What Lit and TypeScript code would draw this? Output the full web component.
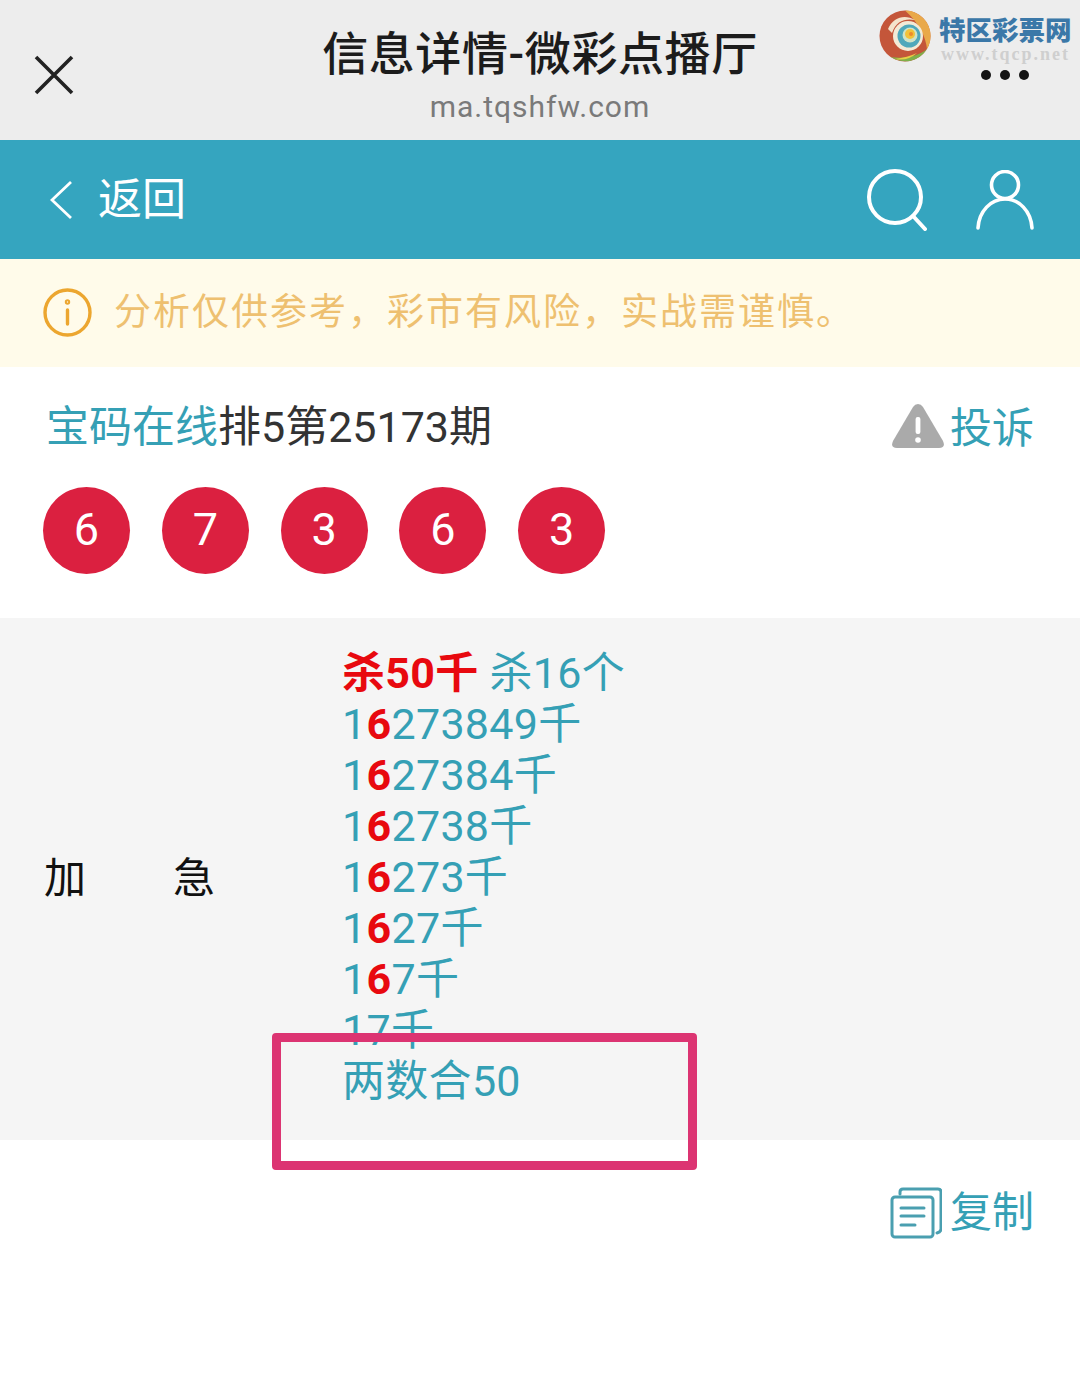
import { LitElement, html, css } from "lit";
import { customElement } from "lit/decorators.js";

const lines = ["273849", "27384", "2738", "273", "27", "7"];

@customElement("app-root")
export class AppRoot extends LitElement {
  static styles = css`
    :host { display: block; position: relative; width: 1080px; height: 1380px; background: #fff; font-family: Roboto, "Noto Sans CJK SC", sans-serif; overflow: hidden; }
    .top { height: 140px; background: #ededed; display: grid; grid-template-columns: 110px 1fr 110px; }
    .close { display: flex; align-items: center; padding-left: 34px; padding-top: 10px; }
    .heading { display: flex; flex-direction: column; align-items: center; padding-top: 24px; }
    .title { font-size: 46px; line-height: 60px; color: #1c1c1c; font-weight: 500; white-space: nowrap; letter-spacing: 0.6px; }
    .url { font-size: 30px; line-height: 44px; color: #7a7a7a; margin-top: 1px; letter-spacing: 1px; }
    .dots { display: flex; gap: 9px; padding: 70px 0 0 11px; }
    .dots i { width: 10px; height: 10px; border-radius: 50%; background: #141414; }
    .nav { height: 119px; background: #35a5bf; display: flex; align-items: center; padding: 0 46px 0 50px; color: #fff; }
    .back { font-size: 44px; margin-left: 24px; flex: 1; line-height: 1; }
    .nav svg { display: block; }
    .nav .user { margin-left: 49px; }
    .notice { height: 108px; background: #fffbea; display: flex; align-items: center; padding-left: 43px; gap: 22px; color: #eec070; font-size: 37px; }
    .notice svg { margin-bottom: 2px; }
    .notice span { letter-spacing: 2px; white-space: nowrap; margin-bottom: 9px; }
    .head { display: flex; justify-content: space-between; align-items: center; padding: 32px 46px 0 46px; height: 48px; box-sizing: content-box; }
    .name { font-size: 43px; color: #333; white-space: nowrap; }
    .name b { font-weight: 400; color: #35a0b5; }
    .report { display: flex; align-items: center; gap: 5px; font-size: 42px; color: #35a0b5; margin-top: 3px; }
    .report svg { margin-top: 3px; margin-left: -2px; }
    .balls { display: flex; gap: 31.8px; padding: 40px 0 44px 43px; }
    .ball { width: 87px; height: 87px; border-radius: 50%; background: #db2040; color: #fff; font-size: 45px; display: flex; align-items: center; justify-content: center; padding-bottom: 2px; box-sizing: border-box; }
    .table { background: #f5f5f5; display: flex; align-items: center; height: 522px; }
    .label { width: 171px; margin-left: 44px; display: flex; justify-content: space-between; font-size: 42px; color: #111; margin-right: 127px; margin-top: -10px; }
    .data { font-size: 43px; line-height: 51px; color: #35a0b5; margin-top: -3px; letter-spacing: 0.3px; }
    .data div { white-space: nowrap; }
    .data .hot { color: #e8090f; font-weight: 700; }
    .copy { display: flex; justify-content: flex-end; align-items: center; gap: 8px; padding: 45px 46px 0 0; font-size: 42px; color: #35a0b5; line-height: 56px; }
    .logo { position: absolute; left: 879px; top: 9px; display: flex; gap: 8px; }
    .brand { display: flex; flex-direction: column; padding-top: 6px; }
    .brand b { font-size: 26.5px; line-height: 32px; color: #3b78a8; font-weight: 900; white-space: nowrap; }
    .brand span { font-family: "Liberation Serif", serif; font-size: 18px; line-height: 20px; letter-spacing: 2px; color: #cfcfcf; font-weight: 700; margin-top: -3px; margin-left: 2px; white-space: nowrap; }
    .mark { position: absolute; left: 272px; top: 1033px; width: 425px; height: 137px; box-sizing: border-box; border: 9px solid #dc3472; border-radius: 4px; }
  `;

  render() {
    return html`
      <div class="top">
        <div class="close">
          <svg width="40" height="40" viewBox="0 0 40 40" fill="none" stroke="#222" stroke-width="3.6"><path d="M2 2 38 38M38 2 2 38"/></svg>
        </div>
        <div class="heading">
          <div class="title">信息详情-微彩点播厅</div>
          <div class="url">ma.tqshfw.com</div>
        </div>
        <div class="dots"><i></i><i></i><i></i></div>
      </div>
      <div class="nav">
        <svg width="24" height="40" viewBox="0 0 24 40" fill="none" stroke="#fff" stroke-width="2.8"><path d="M21 2 2 20 21 38"/></svg>
        <div class="back">返回</div>
        <svg width="60" height="62" viewBox="0 0 60 62" fill="none" stroke="#fff" stroke-width="4" stroke-linecap="round"><circle cx="28" cy="28" r="26"/><path d="M46 47 58 60"/></svg>
        <svg class="user" width="58" height="60" viewBox="0 0 58 60" fill="none" stroke="#fff" stroke-width="3.6" stroke-linecap="round"><circle cx="29" cy="15" r="13.5"/><path d="M2 58C3 41 15 29 29 29S55 41 56 58"/></svg>
      </div>
      <div class="notice">
        <svg width="49" height="49" viewBox="0 0 49 49" fill="none" stroke="#eca62f" stroke-width="3.4" stroke-linecap="round"><circle cx="24.5" cy="24.5" r="22.5"/><path d="M24.5 22V36"/><circle cx="24.5" cy="14" r="1"/></svg>
        <span>分析仅供参考，彩市有风险，实战需谨慎。</span>
      </div>
      <div class="head">
        <div class="name"><b>宝码在线</b>排5第25173期</div>
        <div class="report">
          <svg width="54" height="46" viewBox="0 0 54 46" fill="#aaa"><path d="M27 1 Q24 1 22 4 L2 38 Q-1 45 6 45 H48 Q55 45 52 38 L32 4 Q30 1 27 1Z"/><rect x="24.6" y="14" width="4.8" height="17" rx="2" fill="#fff"/><circle cx="27" cy="37" r="2.8" fill="#fff"/></svg>
          投诉
        </div>
      </div>
      <div class="balls">
        ${["6", "7", "3", "6", "3"].map((n) => html`<div class="ball">${n}</div>`)}
      </div>
      <div class="table">
        <div class="label"><span>加</span><span>急</span></div>
        <div class="data">
          <div><span class="hot">杀50千</span> 杀16个</div>
          ${lines.map((l) => html`<div>1<span class="hot">6</span>${l}千</div>`)}
          <div>17千</div>
          <div>两数合50</div>
        </div>
      </div>
      <div class="copy">
        <svg width="52" height="52" viewBox="0 0 52 52" fill="none" stroke="#4a9fb0" stroke-width="3" stroke-linecap="round"><path d="M10 7V5Q10 2 13 2H48Q51 2 51 5V42Q51 45 47 46"/><rect x="2" y="10" width="41" height="40" rx="3"/><path d="M11 21H34M11 29H34M11 38H25"/></svg>
        复制
      </div>
      <div class="logo">
        <svg width="52" height="54" viewBox="0 0 52 54">
          <circle cx="26" cy="27" r="25.5" fill="#c4563a"/>
          <path d="M26 1.5A25.5 25.5 0 0 1 48 40C47 28 40 14 26 1.5Z" fill="#e9a94a"/>
          <path d="M48 40A25.5 25.5 0 0 1 12 48C24 50 38 48 48 40Z" fill="#7fb04a"/>
          <path d="M38 44A25.5 25.5 0 0 1 16 50C24 49 32 47 38 44Z" fill="#e8cf45"/>
          <path d="M9 20C14 8 26 5 36 11C26 9 17 12 13 24Z" fill="#f4e4cc"/>
          <circle cx="29" cy="27" r="15" fill="#f3ead6"/>
          <circle cx="30" cy="27" r="11.5" fill="#4fa8bb"/>
          <circle cx="31" cy="26" r="7.5" fill="#cfe3c8"/>
          <circle cx="31" cy="25" r="5" fill="#f2c23a"/>
          <circle cx="32" cy="25" r="2" fill="#ee8a2d"/>
        </svg>
        <div class="brand"><b>特区彩票网</b><span>www.tqcp.net</span></div>
      </div>
      <div class="mark"></div>
    `;
  }
}
